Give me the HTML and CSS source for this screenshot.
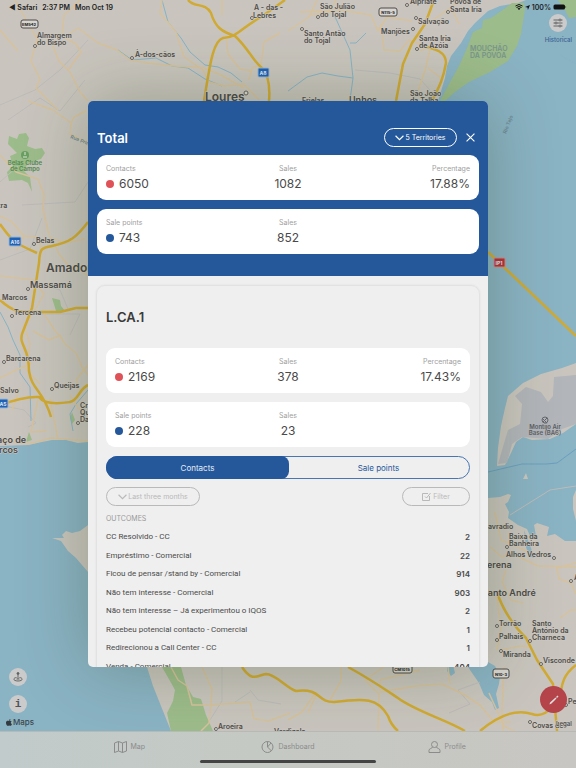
FILE: index.html
```html
<!DOCTYPE html>
<html lang="en">
<head>
<meta charset="utf-8">
<meta name="viewport" content="width=device-width, initial-scale=1">
<title>Territories</title>
<link rel="stylesheet" href="styles.css">
</head>
<body>
<svg class="map" viewBox="0 0 576 768" preserveAspectRatio="xMidYMid slice" role="img" aria-label="Map of Lisbon area">
  <rect class="land" width="576" height="768"/>
  <g class="water">
    <path d="M526 0L518 3L500 6L488 11L475 23L468 31L461 43L451 56L447 66L445 78L438 101V300H488V498L500 497L508 494L511 495L508 502L505 504L509 512L508 518L518 525L527 529L531 538L536 536L534 525L537 523L549 527L547 536L555 534L565 541L576 541V0Z"/>
    <path d="M0 446L28 445L42 442L52 440L66 440L78 443L88 442V525L80 531L72 533L66 531L62 535L64 538L52 538L61 541L68 551L76 558L88 572L120 630L147 667L153 686L161 706L171 731V768H0Z"/>
    <path d="M468 667L488 662L495 666L500 676L499 684L496 694L499 708L495 710L492 702L484 695L479 683ZM447 665H453L455 673L451 676L447 671Z"/>
    <path d="M524 530L531 548L534 558L529 556L526 547Z"/>
  </g>
  <g class="land">
    <path d="M576 363L562 368L541 374L523 383L508 396L505 408L501 426L498 448L497 466L505 465L511 453L516 442L523 437L532 440L550 439L563 433L576 424Z"/>
    <path d="M526 473L528 479L523 479ZM576 490L573 497V509L576 521Z"/>
  </g>
  <path class="apron" d="M576 375L554 377L553 396L548 402L541 392L526 387L515 396L522 404L520 424L508 430L505 440L498 464L507 463L512 444L522 437L548 439L562 429L576 424Z"/>
  <g class="green">
    <path d="M524 3L525 9L521 34L517 46L508 61L490 72L469 82L455 92L445 101H440L449 84L459 66L467 48L473 32L482 28L483 20L491 18L504 9L512 3Z"/>
    <path d="M558 0H576V17L569 18L565 10Z"/>
    <path d="M8 144L9 136L17 139L19 134L26 133L29 138L27 146L35 149L42 148L45 153L41 159L28 163L24 171L30 177L32 192L28 183L22 180L9 181L7 172L13 166L10 156L17 153Z"/>
    <path d="M52 298L60 300L61 306L65 311L56 311ZM29 432L32 440L26 442ZM72 412L75 420L72 424L70 418Z"/>
    <path d="M162 667H181L186 685L193 697L201 699L206 715L213 731H171L167 713L173 701L175 690L170 681Z"/>
  </g>
  <g class="street">
    <path d="M0 105L35 90L60 70L88 40M8 120L40 98L60 111L85 80M0 182L18 166M22 205L75 202L88 182M0 260L30 249L42 218M42 314H80L70 335M44 285L60 290L68 309M0 405L24 410L36 423L28 427M355 70L390 73L420 79L430 90M510 515L550 490L576 486M210 720L222 701L222 667M250 690L258 700L281 704M235 702L250 692M449 713L470 704L458 690L480 682"/>
  </g>
  <g class="stream">
    <path d="M162 0L168 22L181 38L190 52L205 65L218 67L231 73L242 82M118 50L132 60L156 58L172 66L188 68L205 79L222 86M332 10L350 50L353 78L350 100M350 43L356 43L366 33M288 91L307 77L322 73L338 76L353 78M560 55L576 64M0 312L8 327L13 340L20 355L20 373L30 387L31 421M88 390L76 404L70 414L73 431"/>
    <path class="ferry" d="M488 472L522 464L546 464L557 463L576 449"/>
  </g>
  <g class="minor">
    <path d="M15 0L37 39L31 61L40 79L36 88L58 110M52 44L59 61L70 72L80 92L88 101M80 0L64 15L62 36M62 36L76 44L81 52L69 69M65 37L78 28L98 43L117 50L130 60L148 63L175 66L204 68L221 75L244 88M222 0V15M226 35L228 54L240 69L252 71M0 30L18 51M162 0L160 13L176 32L184 57L203 70L209 82L224 86L244 84L259 100M249 80L252 68L261 65L264 42L280 33M288 31L309 17L317 0M309 15L330 12L336 0M300 12L340 10L371 15L378 31L387 17L412 21M381 24L384 50L400 51L409 40L420 44M459 24L452 9M420 51L431 45L426 67L418 91M428 68L441 78M433 20L462 0"/>
    <path d="M28 101L53 110L71 123L74 117L86 111M71 123L70 134L88 143M0 155L16 172L38 179L44 195L43 209L49 235M0 216L12 222L24 236L38 237L42 252M24 236L17 250M52 239L59 254L68 265L80 270L88 276M49 237L65 243L85 239M0 276L34 280L44 294L35 310L24 326L30 344L26 369L40 384M44 314L56 332L60 336L65 344L76 353L82 367L88 375M33 331L49 340L61 335M32 363L14 371L0 378M38 400L31 432L47 431M50 399L58 439M0 440L29 444L51 438L88 441M20 388L12 410M70 395L78 408L88 415M88 365L76 380L81 392"/>
    <path d="M171 667L178 680L187 686L192 705L211 705L237 703L250 702L254 719L269 721L290 713M202 667L212 689L211 705L209 723L201 731M341 667V681L330 700M380 691L380 680L420 670M378 731L379 694L365 680L388 664M380 692L416 686L442 684L463 694L480 705L494 722L511 722M450 684L448 667M504 667L502 711L503 731M489 693L504 726L520 734M490 547L502 557L511 553L538 566L576 567M495 512L501 540L513 545L531 553M506 570L502 582L511 600L523 603M488 590L497 598L501 628L497 650M501 650L521 646L530 647M560 618L571 610L576 610M576 563L557 568L559 579L571 583L576 594M288 720L302 712L316 692M308 713L317 693"/>
  </g>
  <g class="major">
    <path d="M188 0C194 8 205 2 211 13C215 27 222 32 235 36C248 48 253 61 262 68Q271 78 269 101M204 101C210 64 213 41 223 38C238 37 241 28 261 17L285 0M434 0L425 24L412 43L403 64L396 101M423 46C436 49 446 52 446 63C443 80 439 87 432 101"/>
    <path d="M0 224C12 241 14 243 37 253M88 222C76 238 70 242 52 246C39 248 40 251 39 263L32 308L22 334C19 346 29 346 29 371C32 391 43 389 51 417M0 300C13 312 20 312 32 312H60L76 308H88M0 405C14 400 27 396 39 397C45 406 63 403 70 402C78 401 79 389 88 385"/>
    <path d="M488 252L576 336M497 592C504 614 518 630 526 638L537 660L553 684L557 731M576 665C560 677 562 690 560 696M480 731C506 709 523 711 532 714Q543 718 553 706M242 667C252 682 256 676 266 674C276 674 286 688 296 691C322 688 316 702 334 702C365 698 378 698 388 716Q391 725 398 731M348 667C370 679 386 690 398 698C415 711 447 720 465 731"/>
  </g>
  <g class="stops">
    <circle cx="35" cy="46" r="1.5"/><circle cx="132" cy="58" r="1.5"/><circle cx="252" cy="18" r="1.5"/><circle cx="246" cy="93" r="2"/><circle cx="318" cy="17" r="1.5"/><circle cx="302" cy="29" r="1.5"/><circle cx="407" cy="5" r="1.5"/><circle cx="448" cy="12" r="1.5"/><circle cx="416" cy="18" r="1.5"/><circle cx="413" cy="29" r="1.5"/><circle cx="417" cy="49" r="1.5"/><circle cx="34" cy="244" r="1.5"/><circle cx="28" cy="289" r="1.5"/><circle cx="12" cy="316" r="1.5"/><circle cx="4" cy="362" r="1.5"/><circle cx="52" cy="389" r="1.5"/><circle cx="78" cy="423" r="1.5"/><circle cx="507" cy="547" r="1.5"/><circle cx="554" cy="558" r="1.5"/><circle cx="571" cy="581" r="1.5"/><circle cx="497" cy="626" r="1.5"/><circle cx="497" cy="640" r="1.5"/><circle cx="530" cy="641" r="1.5"/><circle cx="501" cy="651" r="1.5"/><circle cx="541" cy="664" r="1.5"/><circle cx="530" cy="722" r="1.5"/><circle cx="566" cy="705" r="1.5"/><circle cx="216" cy="729" r="1.5"/>
  </g>
  <g class="label">
    <text x="37" y="38">Almargem</text><text x="37" y="45">do Bispo</text>
    <text x="135" y="57">À-dos-cãos</text>
    <text x="254" y="10">A - das -</text><text x="253" y="18">Lebres</text>
    <text x="320" y="9">São Julião</text><text x="320" y="17">do Tojal</text>
    <text x="304" y="36">Santo Antão</text><text x="304" y="43">do Tojal</text>
    <text x="410" y="4">Alpriate</text><text x="450" y="4">Póvoa de</text><text x="450" y="12">Santa Iria</text>
    <text x="418" y="24">Salvação</text><text x="381" y="34">Manjões</text>
    <text x="419" y="41">Santa Iria</text><text x="419" y="48">de Azóia</text>
    <text x="410" y="96">São João</text><text x="410" y="103">da Talha</text><text x="302" y="103">Frielas</text>
    <text x="-2" y="208">tra</text><text x="36" y="243">Belas</text><text x="2" y="300">Marcos</text><text x="14" y="315">Tercena</text>
    <text x="6" y="361">Barcarena</text><text x="0" y="393">Salvo</text><text x="54" y="388">Queijas</text>
    <text x="80" y="408">Cruz</text><text x="80" y="415">Quebrada</text><text x="80" y="422">Dafundo</text>
    <text x="484" y="529">Lavradio</text><text x="509" y="539">Baixa da</text><text x="509" y="546">Banheira</text><text x="506" y="557">Alhos Vedros</text>
    <text x="574" y="580">A</text><text x="499" y="626">Torrão</text><text x="499" y="639">Palhais</text><text x="503" y="657">Miranda</text>
    <text x="532" y="626">Santo</text><text x="532" y="633">António da</text><text x="532" y="640">Charneca</text>
    <text x="543" y="663">Visconde</text><text x="568" y="704">Pe</text><text x="532" y="728">Covas de</text><text x="556" y="726" class="legal">Legal</text>
    <text x="218" y="729">Aroeira</text><text x="274" y="734">Verdizela</text>
  </g>
  <g class="label town">
    <text x="349" y="103">Unhos</text><text x="30" y="288">Massamá</text><text x="-3" y="443">aço de</text><text x="-1" y="453">rcos</text>
    <text x="481" y="568">Verena</text><text x="482" y="596">Santo André</text>
  </g>
  <g class="label city"><text x="205" y="101">Loures</text><text x="46" y="272">Amadora</text></g>
  <g class="label place">
    <text x="470" y="51">MOUCHÃO</text><text x="470" y="58">DA PÓVOA</text>
    <text class="park" x="25" y="165">Belas Clube</text><text class="park" x="25" y="171">de Campo</text>
    <text class="base" x="545" y="429">Montijo Air</text><text class="base" x="545" y="435">Base (BA6)</text>
    <text class="river" transform="translate(506 134) rotate(-68)">Rio Tejo</text>
    <text class="river" transform="translate(70 138) rotate(22)">Rua Princ</text>
  </g>
  <circle class="golf" cx="25" cy="155" r="4"/><path class="golf-mark" d="M25 152V155M23 157H27"/>
  <g class="airport"><circle cx="545" cy="420" r="3"/><path d="M543 422L547 418M543 419L546 422"/></g>
  <g class="shield">
    <g class="blue"><rect x="258" y="68" width="11" height="9" rx="1"/><rect x="9" y="237" width="12" height="9" rx="1"/><rect x="-3" y="399" width="11" height="9" rx="1"/></g>
    <rect class="red" x="494" y="258" width="11" height="9" rx="1"/>
    <g class="plain"><rect x="21" y="20" width="17" height="8" rx="2"/><rect x="379" y="8" width="18" height="8" rx="2"/><rect x="493" y="669" width="16" height="9" rx="2"/><rect x="393" y="664" width="19" height="9" rx="2"/></g>
    <g class="light"><text x="263" y="75">A8</text><text x="15" y="244">A16</text><text x="3" y="406">A5</text><text x="499" y="265">IP1</text></g>
    <g class="codes"><text x="29" y="26">EM542</text><text x="388" y="14">N115-5</text><text x="501" y="676">N10-3</text><text x="402" y="671">CM1015</text></g>
  </g>
</svg>

<header class="status">
  <span>◀ Safari</span><span>2:37 PM</span><span class="status-date">Mon Oct 19</span>
  <svg class="icon-wifi" viewBox="0 0 16 12" aria-hidden="true"><path d="M1 4Q8 -2 15 4M3 7Q8 3 13 7"/><path class="solid" d="M5 9Q8 7 11 9L8 12Z"/></svg>
  <svg class="icon-arrow" viewBox="0 0 12 12" aria-hidden="true"><path d="M12 0L7 12L6 6L0 5Z"/></svg>
  <span>100%</span>
  <svg class="icon-battery" viewBox="0 0 28 12" aria-hidden="true"><rect x="1" y="1" width="23" height="10" rx="3"/><path d="M25 4Q28 6 25 8Z"/></svg>
</header>

<div class="historical">
  <button class="round" id="historical" aria-labelledby="historical-label"><svg viewBox="0 0 20 20"><path d="M1 4H12M16 4H19M1 10H4M8 10H19M1 16H12M16 16H19"/><circle cx="14" cy="4" r="2"/><circle cx="6" cy="10" r="2"/><circle cx="14" cy="16" r="2"/></svg></button>
  <label id="historical-label" for="historical">Historical</label>
</div>

<div class="tools">
  <button class="round" aria-label="Locate"><svg viewBox="0 0 20 20"><circle class="solid" cx="10" cy="3" r="2"/><path d="M10 5V14M7 11C-1 12 0 18 10 18S21 12 13 11M7 14H13"/></svg></button>
  <button class="round info" aria-label="Information">i</button>
  <div class="brand"><svg viewBox="0 0 16 18" aria-hidden="true"><path d="M8 5C10 4 13 3 15 6C12 8 12 12 16 13C14 18 12 19 9 17C7 17 4 20 1 14C-2 7 2 3 8 5ZM8 4C8 1 10 0 12 0C12 2 10 4 8 4Z"/></svg>Maps</div>
</div>

<button class="fab" aria-label="Edit"><svg viewBox="0 0 20 20"><path d="M1 19L2 15L13 5L15 7L5 17ZM14 4L17 1L19 3L16 6Z"/></svg></button>

<main class="modal" role="dialog" aria-label="Total">
  <section class="summary">
    <div class="bar">
      <h1>Total</h1>
      <button class="pill territories"><svg class="chevron" viewBox="0 0 16 10"><path d="M1 1L8 8L15 1"/></svg>5 Territories</button>
      <button class="close" aria-label="Close"><svg viewBox="0 0 16 16"><path d="M1 1L15 15M15 1L1 15"/></svg></button>
    </div>
    <dl class="card">
      <div><dt>Contacts</dt><dd><i class="dot red"></i>6050</dd></div>
      <div><dt>Sales</dt><dd>1082</dd></div>
      <div><dt>Percentage</dt><dd>17.88%</dd></div>
    </dl>
    <dl class="card">
      <div><dt>Sale points</dt><dd><i class="dot"></i>743</dd></div>
      <div><dt>Sales</dt><dd>852</dd></div>
    </dl>
  </section>
  <section class="panel">
    <h2>L.CA.1</h2>
    <dl class="card">
      <div><dt>Contacts</dt><dd><i class="dot red"></i>2169</dd></div>
      <div><dt>Sales</dt><dd>378</dd></div>
      <div><dt>Percentage</dt><dd>17.43%</dd></div>
    </dl>
    <dl class="card">
      <div><dt>Sale points</dt><dd><i class="dot"></i>228</dd></div>
      <div><dt>Sales</dt><dd>23</dd></div>
    </dl>
    <div class="segments">
      <button class="segment active" aria-pressed="true">Contacts</button>
      <button class="segment" aria-pressed="false">Sale points</button>
    </div>
    <div class="filters">
      <button class="pill period"><svg class="chevron" viewBox="0 0 16 10"><path d="M1 1L8 8L15 1"/></svg>Last three months</button>
      <button class="pill filter"><svg class="compose" viewBox="0 0 18 18"><path d="M12 3H1V17H15V8M6 9L9 12L17 2"/></svg>Filter</button>
    </div>
    <table>
      <caption>OUTCOMES</caption>
      <tbody>
        <tr><th scope="row">CC Resolvido - CC</th><td>2</td></tr>
        <tr><th scope="row">Empréstimo - Comercial</th><td>22</td></tr>
        <tr><th scope="row">Ficou de pensar /stand by - Comercial</th><td>914</td></tr>
        <tr><th scope="row">Não tem interesse - Comercial</th><td>903</td></tr>
        <tr><th scope="row">Não tem interesse – Já experimentou o IQOS</th><td>2</td></tr>
        <tr><th scope="row">Recebeu potencial contacto - Comercial</th><td>1</td></tr>
        <tr><th scope="row">Redirecionou a Call Center - CC</th><td>1</td></tr>
        <tr><th scope="row">Venda - Comercial</th><td>404</td></tr>
      </tbody>
    </table>
  </section>
</main>

<nav class="tabbar">
  <a href="#map"><svg viewBox="0 0 26 24"><path d="M1 4L9 1L17 4L25 1V20L17 23L9 20L1 23ZM9 1V20M17 4V23"/></svg>Map</a>
  <a href="#dashboard"><svg viewBox="0 0 26 24"><circle cx="13" cy="12" r="11"/><path d="M13 1V12L21 20M13 12L20 4"/></svg>Dashboard</a>
  <a href="#profile"><svg viewBox="0 0 26 24"><circle cx="13" cy="7" r="6"/><path d="M9 12C8 16 2 14 2 19V23H24V19C24 14 18 16 17 12"/></svg>Profile</a>
</nav>
<div class="home"></div>
</body>
</html>
```

FILE: styles.css
```css
* { box-sizing: border-box; }

body {
  margin: 0;
  height: 100vh;
  overflow: hidden;
  display: grid;
  place-items: center;
  font-family: Inter, "Liberation Sans", sans-serif;
  color: #4a4a4a;
  background: #c8c4bd;
}

button { font: inherit; color: inherit; padding: 0; border: 0; background: none; }
svg { display: block; fill: none; }
h1, h2, dl, dd { margin: 0; }

/* Map */
.map { position: absolute; inset: 0; width: 100%; height: 100%; }
.land { fill: #c9c5be; }
.water { fill: #8ab3c4; }
.apron { fill: #b2b5ba; }
.green { fill: #9dbc8b; }
.street { stroke: #bdbbb9; stroke-width: 1; }
.stream { stroke: #86b3c5; stroke-width: 1; }
.stream .ferry { stroke: #6c9fbf; }
.minor { stroke: #d6c29d; stroke-width: 1.5; stroke-linejoin: round; }
.major { stroke: #d0aa32; stroke-width: 2.5; stroke-linejoin: round; }
.stops { fill: #ddd9d3; stroke: #66625d; stroke-width: 1; }
.label { fill: #4d4b49; font-size: 7px; font-weight: 600; stroke: #cfcbc4; stroke-width: 1px; paint-order: stroke; }
.label.town { font-size: 9px; }
.label.city { font-size: 12px; }
.label.place { fill: #78968a; stroke: none; }
.label .park { fill: #4f8a4a; font-size: 6px; text-anchor: middle; }
.label .base { fill: #5c5e63; font-size: 6px; text-anchor: middle; }
.label .river { fill: #6d8794; font-size: 5px; }
.label .legal { font-size: 6px; }
.golf { fill: #6b9f63; }
.golf-mark { stroke: #dfe8d8; }
.airport { stroke: #66686d; stroke-width: 1; }
.shield { font-size: 5px; font-weight: 800; text-anchor: middle; fill: #333; }
.shield .blue rect { fill: #1e62b8; stroke: #9eb5cf; }
.shield .red { fill: #b83038; stroke: #d08b88; }
.shield .codes { font-size: 4px; }
.shield .plain rect { fill: #d8d5d0; stroke: #4c4a48; }
.shield .light { fill: #d5dfeb; }

/* Status bar */
.status {
  position: absolute;
  inset: 0 0 auto;
  display: flex;
  align-items: center;
  gap: 5px;
  height: 14px;
  padding: 0 9px;
  font-size: 7px;
  font-weight: 600;
  color: #222;
}
.status-date { margin-right: auto; }
.status svg + svg, .status svg + span, .status span + .icon-battery { margin-left: -3px; }
.icon-wifi { width: 8px; height: 6px; stroke: #111; stroke-width: 2; }
.icon-wifi .solid { fill: #111; stroke: none; }
.icon-arrow { width: 5px; height: 5px; fill: #111; }
.icon-battery { width: 14px; height: 6px; fill: #111; }

/* Map controls */
.round {
  display: grid;
  place-items: center;
  width: 18px;
  height: 18px;
  border-radius: 50%;
  background: #cbcbcb;
}
.round svg { width: 10px; height: 10px; stroke: #666; stroke-width: 2; }
.round .solid { fill: #555; }
.info { font-family: "Liberation Mono", monospace; font-size: 11px; font-weight: 700; color: #555; }
.historical {
  position: absolute;
  top: 14px;
  right: 4px;
  display: grid;
  justify-items: center;
  gap: 4px;
  font-size: 6px;
  line-height: 8px;
  font-weight: 500;
  color: #3c6292;
}
.tools { position: absolute; left: 6px; bottom: 40px; display: grid; gap: 9px; }
.tools .round { margin-left: 3px; }
.brand { display: flex; align-items: center; gap: 1px; margin-top: -6px; font-size: 8px; font-weight: 500; line-height: 12px; color: #3d474c; }
.brand svg { width: 6px; height: 7px; fill: #333b40; }
.fab {
  position: absolute;
  right: 9px;
  bottom: 55px;
  display: grid;
  place-items: center;
  width: 27px;
  height: 27px;
  border-radius: 50%;
  background: #b4444a;
}
.fab svg { width: 10px; height: 10px; fill: #ddd; }

/* Modal */
.modal {
  position: relative;
  width: calc(100% - 48px);
  max-width: 400px;
  height: calc(100vh - 202px);
  overflow: hidden;
  border-radius: 5px;
  background: #efefef;
  box-shadow: 0 0 70px rgba(40, 60, 20, .3);
}
.summary { display: grid; gap: 9px; padding: 27px 9px 22px; background: #24589b; }
.bar { display: flex; align-items: center; height: 19px; margin-bottom: -1px; color: #fff; }
h1, h2 { font-size: 13px; line-height: 18px; font-weight: 600; }
h2 { padding: 22px 0; color: #3a3a3a; }
.pill {
  display: flex;
  align-items: center;
  justify-content: center;
  gap: 1px;
  height: 19px;
  border: 1px solid currentColor;
  border-radius: 10px;
  font-size: 7px;
}
.territories { width: 73px; margin-left: auto; }
.chevron { width: 9px; height: 6px; stroke: currentColor; stroke-width: 2; }
.close { padding: 4px; margin-left: 5px; }
.close svg { width: 9px; height: 9px; stroke: #fff; stroke-width: 2; }
.card {
  display: grid;
  grid-template-columns: repeat(3, 1fr);
  height: 45px;
  padding: 9px;
  border-radius: 9px;
  background: #fff;
  text-align: center;
}
.card > :first-child { text-align: left; }
.card > :nth-child(3) { text-align: right; }
dt { font-size: 7px; line-height: 10px; color: #a0a0a0; }
dd { font-size: 12px; line-height: 20px; }
.dot { display: inline-block; width: 8px; height: 8px; margin-right: 5px; border-radius: 50%; background: #24589b; }
.dot.red { background: #df5358; }
.panel {
  display: grid;
  gap: 9px;
  margin: 9px 8px 0;
  padding: 0 9px;
  border: 1px solid #e2e2e2;
  border-radius: 9px;
  box-shadow: 0 0 2px #ddd;
}
.panel h2 { margin-bottom: -9px; }
.segments { display: grid; grid-template-columns: 1fr 1fr; height: 23px; border: 1px solid #4876b1; border-radius: 12px; }
.segment { margin: -1px; border-radius: 12px; font-size: 8px; color: #24589b; }
.segment.active { color: #e6edf6; background: #24589b; border-radius: 12px 8px 8px 12px; }
.filters { display: flex; justify-content: space-between; margin-top: -1px; }
.filters .pill { color: #b9b9b9; }
.period { width: 94px; }
.filter { width: 68px; gap: 2px; }
.compose { width: 9px; height: 9px; stroke: currentColor; stroke-width: 2; }
table { width: 100%; height: 148px; border-collapse: collapse; font-size: 8px; line-height: 10px; margin-top: -1px; }
caption { height: 10px; font-size: 7px; line-height: 10px; margin-bottom: 4px; text-align: left; color: #999; }
th, td { padding: 0; }
th { text-align: left; font-family: Roboto, Inter, sans-serif; font-weight: 400; }
td { text-align: right; font-weight: 600; }

/* Tab bar */
.tabbar {
  position: absolute;
  inset: auto 0 0;
  display: grid;
  grid-template-columns: repeat(3, 1fr);
  height: 37px;
  padding: 0 50px 7px;
  border-top: 1px solid #b7b9b6;
  background: linear-gradient(90deg, #c1cbcb, #c5c9c3 45%, #c8c6c2);
}
.tabbar a { display: flex; align-items: center; justify-content: center; gap: 4px; font-size: 7px; color: #8b8b8b; text-decoration: none; }
.tabbar svg { width: 13px; height: 12px; stroke: #8b8b8b; stroke-width: 2; }
.home { position: absolute; bottom: 5px; width: 176px; height: 3px; border-radius: 2px; background: #444; }
```
